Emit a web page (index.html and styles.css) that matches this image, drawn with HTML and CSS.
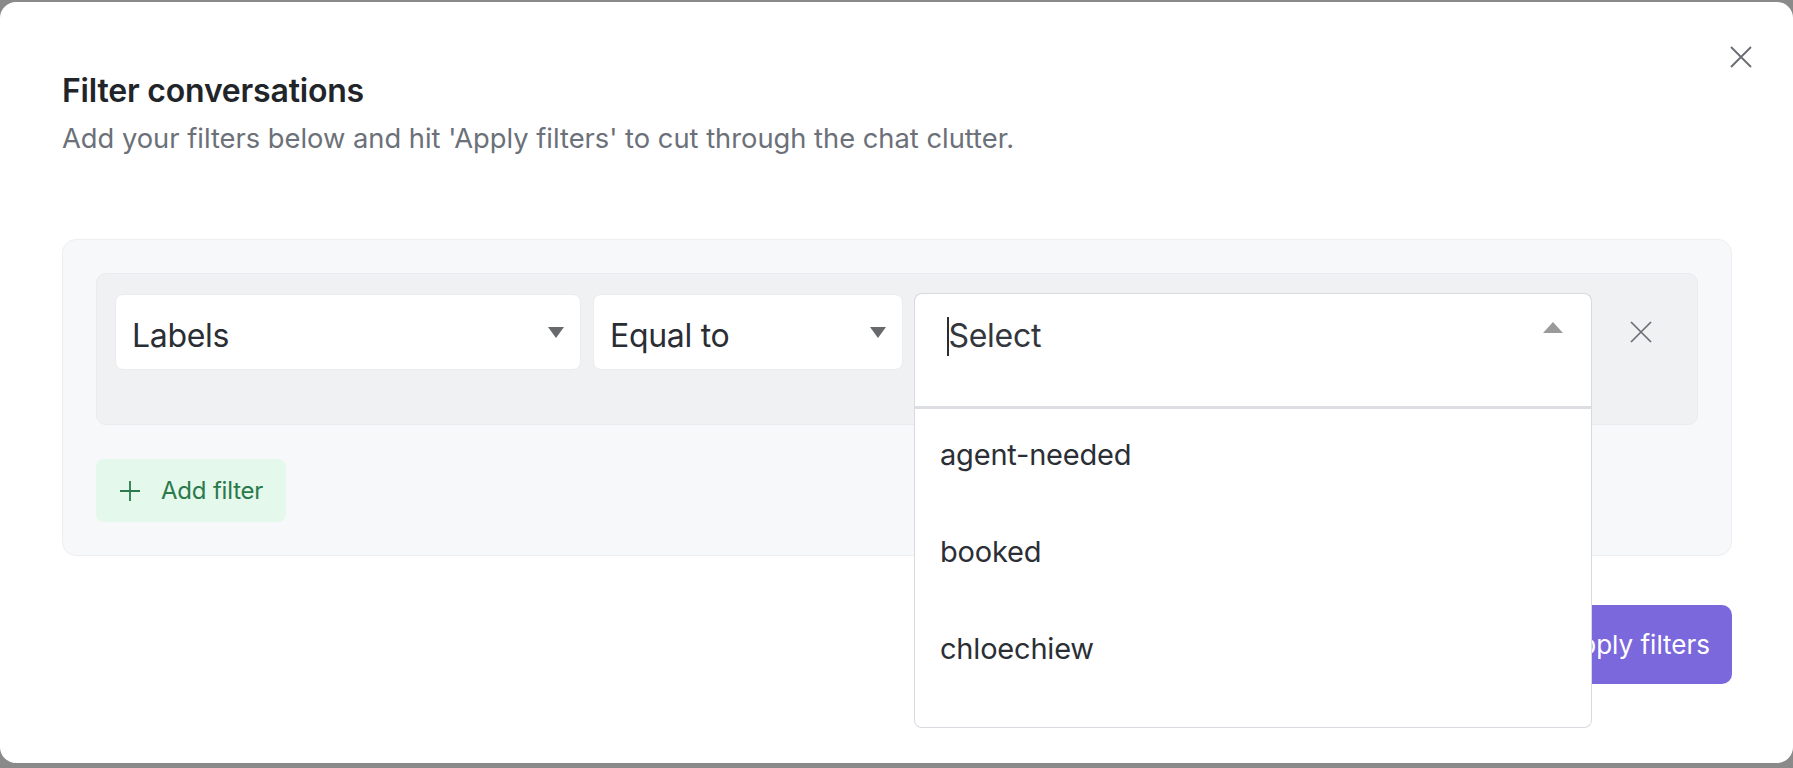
FILE: index.html
```html
<!DOCTYPE html>
<html lang="en">
<head>
<meta charset="utf-8">
<title>Filter conversations</title>
<link rel="stylesheet" href="styles.css">
</head>
<body>
<div class="modal">
  <button class="close" aria-label="Close">
    <svg width="24" height="24" viewBox="0 0 24 24"><path d="M2 2 L22 22 M22 2 L2 22" stroke="#676b72" stroke-width="1.8" fill="none"/></svg>
  </button>
  <h1 class="title">Filter conversations</h1>
  <p class="subtitle">Add your filters below and hit 'Apply filters' to cut through the chat clutter.</p>

  <div class="panel">
    <div class="row">
      <div class="field field-attr">
        <span class="value">Labels</span>
        <svg class="caret-down" width="16" height="11" viewBox="0 0 16 11"><polygon points="0,0 16,0 8,11" fill="#67696d"/></svg>
      </div>
      <div class="field field-op">
        <span class="value">Equal to</span>
        <svg class="caret-down" width="16" height="11" viewBox="0 0 16 11"><polygon points="0,0 16,0 8,11" fill="#67696d"/></svg>
      </div>
      <div class="multi">
        <div class="multi-control">
          <div class="multi-top">
            <span class="cursor"></span><span class="value">Select</span>
            <svg class="caret-up" width="20" height="11" viewBox="0 0 20 11"><polygon points="0,11 20,11 10,0" fill="#999a9c"/></svg>
          </div>
        </div>
        <ul class="menu">
          <li>agent-needed</li>
          <li>booked</li>
          <li>chloechiew</li>
        </ul>
      </div>
      <button class="remove" aria-label="Remove filter">
        <svg width="22" height="22" viewBox="0 0 22 22"><path d="M1 1 L21 21 M21 1 L1 21" stroke="#6a6e75" stroke-width="1.7" fill="none"/></svg>
      </button>
    </div>
    <button class="add">
      <svg width="22" height="22" viewBox="0 0 22 22"><path d="M11 1 V21 M1 11 H21" stroke="#2c7a4d" stroke-width="1.8" fill="none"/></svg>
      <span>Add filter</span>
    </button>
  </div>

  <div class="footer">
    <button class="apply">Apply filters</button>
  </div>
</div>
</body>
</html>
```
FILE: styles.css
```css
* { box-sizing: border-box; }
html, body { margin: 0; height: 100%; }
body {
  background: #8a8a8a;
  overflow: hidden;
  font-family: Inter, "Noto Sans", "Liberation Sans", sans-serif;
}
button { font-family: inherit; border: none; cursor: pointer; }

.modal {
  position: relative;
  margin-top: 2px;
  height: 761px;
  background: #ffffff;
  border-radius: 16px;
  padding: 70px 61px 0 62px;
}
.close {
  position: absolute;
  top: 43px;
  right: 40px;
  width: 24px;
  height: 24px;
  padding: 0;
  background: none;
  display: flex;
}
.title {
  margin: 0;
  font-size: 32px;
  line-height: 38px;
  font-weight: 600;
  color: #212529;
  letter-spacing: -0.2px;
}
.subtitle {
  margin: 12px 0 0;
  font-size: 27.3px;
  line-height: 34px;
  font-weight: 400;
  color: #6b7079;
}

.panel {
  margin-top: 83px;
  background: #f7f8fa;
  border: 1px solid #eceef1;
  border-radius: 14px;
  padding: 33px;
}
.row {
  display: flex;
  align-items: flex-start;
  background: #f0f1f3;
  border: 1px solid #e9ebee;
  border-radius: 10px;
  padding: 19px 0 15px 18px;
}
.field {
  height: 76px;
  background: #ffffff;
  border: 1px solid #eaecef;
  border-radius: 8px;
  display: flex;
  align-items: center;
  justify-content: space-between;
  padding: 7px 16px 0 16px;
  margin-top: 1px;
}
.field .caret-down { margin-top: -7px; }
.field-attr { width: 466px; }
.field-op { width: 310px; margin-left: 12px; }
.value {
  font-size: 32px;
  line-height: 38px;
  color: #2a2e34;
  letter-spacing: -0.3px;
}

.multi {
  position: relative;
  width: 678px;
  margin-left: 11px;
  z-index: 2;
}
.multi-control {
  height: 116px;
  background: #ffffff;
  border: 1px solid #d7dadf;
  border-bottom: 3px solid #dcdee3;
  border-radius: 8px 8px 0 0;
  padding: 0 28px 0 32px;
}
.multi-top {
  height: 76px;
  display: flex;
  align-items: center;
  padding-top: 8px;
}
.cursor {
  width: 1.5px;
  height: 39px;
  background: #2a2e34;
}
.multi-top .value { flex: 1; color: #33373d; }
.caret-up { margin-top: -18px; }

.menu {
  position: absolute;
  left: 0;
  top: 116px;
  width: 100%;
  height: 319px;
  margin: 0;
  padding: 0;
  list-style: none;
  background: #ffffff;
  border: 1px solid #d7dadf;
  border-top: none;
  border-radius: 0 0 8px 8px;
  overflow: hidden;
}
.menu li {
  height: 97px;
  display: flex;
  align-items: center;
  padding: 0 0 6px 25px;
  font-size: 29px;
  color: #2b2f35;
  letter-spacing: -0.2px;
}

.remove {
  margin-left: 38px;
  margin-top: 1px;
  height: 76px;
  padding: 0;
  background: none;
  display: flex;
  align-items: center;
}

.add {
  margin-top: 34px;
  width: 190px;
  height: 63px;
  background: #e4f8eb;
  border-radius: 8px;
  display: flex;
  align-items: center;
  padding: 0 0 0 23px;
  gap: 20px;
  color: #2a7a4b;
  font-size: 24px;
  font-weight: 400;
  letter-spacing: -0.2px;
}

.footer {
  display: flex;
  justify-content: flex-end;
  margin-top: 49px;
}
.apply {
  height: 79px;
  padding: 0 22px;
  background: #7b68dd;
  color: #ffffff;
  border-radius: 10px;
  font-size: 26px;
  font-weight: 400;
}
```
